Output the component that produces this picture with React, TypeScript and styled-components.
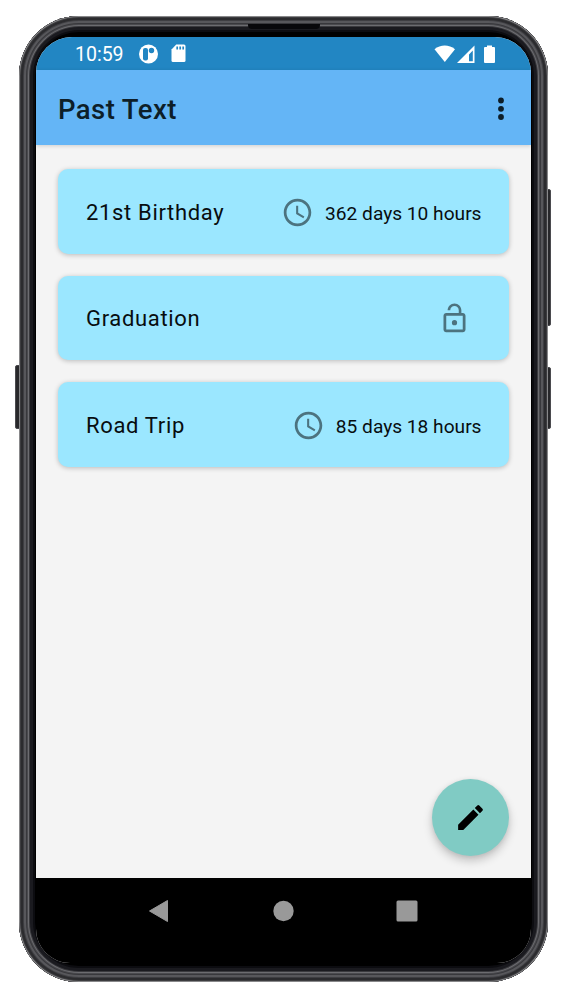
import React from "react";
import styled, { createGlobalStyle } from "styled-components";

const GlobalStyle = createGlobalStyle`
  * { box-sizing: border-box; }
  body { margin: 0; background: #fff; font-family: Roboto, "Liberation Sans", sans-serif; }
`;

const Stage = styled.div`
  position: relative;
  width: 566px;
  height: 1000px;
  padding: 16px 18px 18px 19px;
  background: #fff;
`;

const SideKey = styled.div<{ $side: "left" | "right"; $top: number; $height: number }>`
  position: absolute;
  ${(p) => p.$side}: 15px;
  top: ${(p) => p.$top}px;
  width: 8px;
  height: ${(p) => p.$height}px;
  border-radius: 2px;
  background: #28282b;
  border: 1px solid #4a4a4e;
`;

const Phone = styled.div`
  position: relative;
  width: 529px;
  height: 966px;
  padding: 21px 17px 0;
  border-radius: 60px;
  background: #000;
  box-shadow:
    inset 0 0 0 1px #88888a,
    inset 0 0 0 2px #3c3c3f,
    inset 0 0 0 4px #2b2b2e,
    inset 0 0 0 5px #3e3e42,
    inset 0 0 0 7px #57575b,
    inset 0 0 0 8px #38383c,
    inset 0 0 0 9px #4a4a4e,
    inset 0 0 0 10px #6c6c70,
    inset 0 0 0 11px #3a3a3e,
    inset 0 0 0 14px #1a1a1f,
    inset 0 0 0 16px #0c0c10;
`;

const Speaker = styled.div`
  position: absolute;
  top: 8px;
  left: 229px;
  width: 72px;
  height: 5px;
  border-radius: 0 0 4px 4px;
  background: #08080b;
`;

const Screen = styled.div`
  display: flex;
  flex-direction: column;
  width: 495px;
  height: 926px;
  border-radius: 36px 36px 34px 34px;
  overflow: hidden;
  background: #f4f4f4;
`;

const StatusBar = styled.header`
  display: flex;
  align-items: center;
  flex: 0 0 33px;
  height: 33px;
  padding: 0 35px 0 39px;
  background: #2286c3;
  color: #fff;
`;

const Clock = styled.span`
  width: 64px;
  font-size: 19.5px;
  line-height: 31px;
  padding-top: 2px;
`;

const StatusIcons = styled.div<{ $end?: boolean }>`
  display: flex;
  align-items: center;
  gap: 12px;
  margin-left: ${(p) => (p.$end ? "auto" : "0")};
`;

const Glyph = styled.svg`
  display: block;
  flex: none;
`;

const AppBar = styled.div`
  position: relative;
  display: flex;
  align-items: center;
  justify-content: space-between;
  flex: 0 0 75px;
  padding: 5px 26px 0 22px;
  background: #64b5f6;
  box-shadow: 0 1px 4px rgba(0, 0, 0, 0.16);
`;

const Title = styled.h1`
  margin: 0;
  font-size: 27.5px;
  font-weight: 500;
  line-height: 32px;
  letter-spacing: 0.42px;
  color: #0d1e29;
`;

const MenuButton = styled.button`
  margin-top: -3px;
  padding: 0;
  border: 0;
  background: none;
`;

const Content = styled.main`
  position: relative;
  flex: 1;
  padding: 24px 22px;
`;

const CardList = styled.div`
  display: flex;
  flex-direction: column;
  gap: 22px;
`;

const Card = styled.article`
  display: flex;
  align-items: center;
  height: 84.5px;
  padding: 2px 27.5px 0 28px;
  border-radius: 10px;
  background: #9be7ff;
  box-shadow: 0 1px 5px rgba(0, 0, 0, 0.24);
  color: #080d0f;
`;

const CardTitle = styled.span`
  flex: 1;
  font-size: 22px;
  letter-spacing: 0.66px;
`;

const Remaining = styled.span`
  margin-left: 11px;
  padding-top: 2px;
  font-size: 19.15px;
`;

const LockSlot = styled.div`
  padding-right: 11px;
`;

const Fab = styled.button`
  position: absolute;
  right: 22px;
  bottom: 22px;
  display: flex;
  align-items: center;
  justify-content: center;
  width: 77px;
  height: 77px;
  padding: 0;
  border: 0;
  border-radius: 50%;
  background: #80cbc4;
  box-shadow: 0 5px 10px rgba(0, 0, 0, 0.2), 0 1px 5px rgba(0, 0, 0, 0.08);
`;

const NavBar = styled.nav`
  display: flex;
  justify-content: space-between;
  align-items: flex-start;
  flex: 0 0 85px;
  padding: 21px 113px 0 111px;
  background: #000;
`;

const ClockIcon = () => (
  <Glyph width="33" height="33" viewBox="0 0 24 24" fill="#4c737f">
    <path d="M11.99 2C6.47 2 2 6.48 2 12s4.47 10 9.99 10C17.52 22 22 17.52 22 12S17.52 2 11.99 2zM12 20c-4.42 0-8-3.58-8-8s3.58-8 8-8 8 3.58 8 8-3.58 8-8 8z" />
    <path d="M12.5 7H11v6l5.25 3.15.75-1.23-4.5-2.67z" />
  </Glyph>
);

const UnlockIcon = () => (
  <Glyph width="33" height="33" viewBox="0 0 24 24" fill="#4c737f">
    <path d="M12 16.9a1.9 1.9 0 1 0 0-3.8 1.9 1.9 0 0 0 0 3.8zm6-8.9h-1V6c0-2.76-2.24-5-5-5S7 3.24 7 6h1.9c0-1.71 1.39-3.1 3.1-3.1s3.1 1.39 3.1 3.1v2H6c-1.1 0-2 .9-2 2v10c0 1.1.9 2 2 2h12c1.1 0 2-.9 2-2V10c0-1.1-.9-2-2-2zm0 12H6V10h12v10z" />
  </Glyph>
);

const entries = [
  { title: "21st Birthday", remaining: "362 days 10 hours" },
  { title: "Graduation" },
  { title: "Road Trip", remaining: "85 days 18 hours" },
];

export default function App() {
  return (
    <Stage>
      <GlobalStyle />
      <SideKey $side="left" $top={365} $height={64} />
      <SideKey $side="right" $top={189} $height={137} />
      <SideKey $side="right" $top={367} $height={62} />
      <Phone>
        <Speaker />
        <Screen>
          <StatusBar>
            <Clock>10:59</Clock>
            <StatusIcons>
              <Glyph width="20" height="20" viewBox="0 0 20 20">
                <circle cx="9.5" cy="10" r="9.5" fill="#fff" />
                <rect x="4" y="4" width="5" height="12.5" rx="2" fill="#2286c3" />
                <circle cx="12.5" cy="6.5" r="2.7" fill="#2286c3" />
              </Glyph>
              <Glyph width="15" height="19" viewBox="0 0 15 19">
                <path d="M5.2 0.5H13A1.5 1.5 0 0 1 14.5 2v14.5A1.5 1.5 0 0 1 13 18H2a1.5 1.5 0 0 1-1.5-1.5V5.5z" fill="#fff" />
                <path d="M6.2 2.5v3M9.2 2.5v3M12.2 2.5v3" stroke="#2286c3" strokeWidth="1.7" />
              </Glyph>
            </StatusIcons>
            <StatusIcons $end>
              <Glyph width="62" height="20" viewBox="0 0 62 20" fill="#fff">
                <path d="M0.5 5.2C6.5 0.3 15 0.3 21 5.2L10.8 18z" />
                <path d="M40.5 1.5V19H23zM35 10.4V17.2H38.8V6.4z" fillRule="evenodd" />
                <path d="M53 1.5h5V3h2a1 1 0 0 1 1 1v14a1 1 0 0 1-1 1h-9a1 1 0 0 1-1-1V4a1 1 0 0 1 1-1h2z" />
              </Glyph>
            </StatusIcons>
          </StatusBar>
          <AppBar>
            <Title>Past Text</Title>
            <MenuButton aria-label="More options">
              <Glyph width="8" height="24" viewBox="0 0 8 24" fill="#0d1e29">
                <circle cx="4" cy="3.5" r="2.9" />
                <circle cx="4" cy="11.8" r="2.9" />
                <circle cx="4" cy="20" r="2.9" />
              </Glyph>
            </MenuButton>
          </AppBar>
          <Content>
            <CardList>
              {entries.map((e) => (
                <Card key={e.title}>
                  <CardTitle>{e.title}</CardTitle>
                  {e.remaining ? (
                    <>
                      <ClockIcon />
                      <Remaining>{e.remaining}</Remaining>
                    </>
                  ) : (
                    <LockSlot>
                      <UnlockIcon />
                    </LockSlot>
                  )}
                </Card>
              ))}
            </CardList>
            <Fab aria-label="Write">
              <Glyph width="33" height="33" viewBox="0 0 24 24" fill="#000">
                <path d="M3 17.25V21h3.75L17.81 9.94l-3.75-3.75L3 17.25zM20.71 7.04a1 1 0 0 0 0-1.41l-2.34-2.34a1 1 0 0 0-1.41 0l-1.83 1.83 3.75 3.75 1.83-1.83z" />
              </Glyph>
            </Fab>
          </Content>
          <NavBar>
            <Glyph width="22" height="24" viewBox="0 0 22 24">
              <path d="M2.5 12L20.5 1.5v21z" fill="#999" stroke="#999" strokeLinejoin="round" />
            </Glyph>
            <Glyph width="22" height="24" viewBox="0 0 22 24">
              <circle cx="11.5" cy="12" r="10.2" fill="#999" />
            </Glyph>
            <Glyph width="22" height="24" viewBox="0 0 22 24">
              <rect x="0.5" y="1.5" width="21" height="21" rx="1.5" fill="#999" />
            </Glyph>
          </NavBar>
        </Screen>
      </Phone>
    </Stage>
  );
}
